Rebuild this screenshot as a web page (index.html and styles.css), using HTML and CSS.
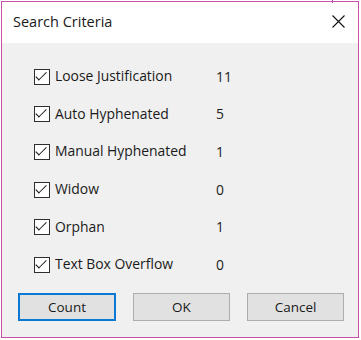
FILE: index.html
```html
<!DOCTYPE html>
<html lang="en">
<head>
    <meta charset="UTF-8">
    <title>Search Criteria</title>
    <link rel="stylesheet" href="styles.css">
</head>
<body>
    <div class="dialog">
        <span class="tick-mark"></span>
        <div class="title-bar">
            <span class="title">Search Criteria</span>
            <svg class="close" width="13" height="13" viewBox="0 0 13 13">
                <path d="M0.5 0.5 L12.5 12.5 M12.5 0.5 L0.5 12.5" stroke="#111" stroke-width="1.1" fill="none"/>
            </svg>
        </div>

        <div class="content">
            <div class="criteria">
                <div class="row"><span class="check"></span><span class="label">Loose Justification</span><span class="count">11</span></div>
                <div class="row"><span class="check"></span><span class="label">Auto Hyphenated</span><span class="count">5</span></div>
                <div class="row"><span class="check"></span><span class="label">Manual Hyphenated</span><span class="count">1</span></div>
                <div class="row"><span class="check"></span><span class="label">Widow</span><span class="count">0</span></div>
                <div class="row"><span class="check"></span><span class="label">Orphan</span><span class="count">1</span></div>
                <div class="row"><span class="check"></span><span class="label">Text Box Overflow</span><span class="count">0</span></div>
            </div>

            <div class="buttons">
                <button class="btn btn-default">Count</button>
                <button class="btn">OK</button>
                <button class="btn">Cancel</button>
            </div>
        </div>
    </div>
</body>
</html>
```

FILE: styles.css
```css
body {
    margin: 0;
    background-color: #ffffff;
    font-family: "Open Sans", "Noto Sans", sans-serif;
    color: #1a1a1a;
}

.dialog {
    position: relative;
    margin: 1px 0 0 1px;
    width: 356px;
    height: 335px;
    border: 1px solid #c94fa9;
    background-color: #f0f0f0;
    display: flex;
    flex-direction: column;
}

.tick-mark {
    position: absolute;
    top: -2px;
    left: 330px;
    width: 1px;
    height: 3px;
    background-color: #c94fa9;
}

.title-bar {
    height: 41px;
    background-color: #ffffff;
    display: flex;
    align-items: center;
    justify-content: space-between;
    padding: 0 13px 0 11px;
}

.title {
    font-size: 14.5px;
    padding-bottom: 2px;
}

.close {
    display: block;
    margin-bottom: 2px;
}

.content {
    flex: 1;
    padding: 19px 0 0 16px;
}

.criteria {
    padding-left: 16px;
}

.row {
    display: flex;
    align-items: center;
    height: 37.6px;
    font-size: 13.9px;
}

.row:first-child {
    margin-top: -4px;
}

.check {
    width: 14px;
    height: 14px;
    border: 1px solid #2e2e2e;
    background-color: #ffffff;
    position: relative;
    flex-shrink: 0;
}

.check::after {
    content: "";
    position: absolute;
    left: 2px;
    top: 1px;
    width: 8px;
    height: 4px;
    border-left: 1.3px solid #222;
    border-bottom: 1.3px solid #222;
    transform: translate(0, 2px) rotate(-45deg) scaleX(1.25);
    transform-origin: 40% 60%;
}

.label {
    width: 161px;
    padding-left: 5px;
    padding-bottom: 2px;
}

.count {
    padding-bottom: 1px;
}

.buttons {
    display: flex;
    gap: 17px;
    margin-top: 9px;
}

.btn {
    width: 97px;
    height: 28px;
    font-family: "Open Sans", "Noto Sans", sans-serif;
    font-size: 13.5px;
    color: #1a1a1a;
    background-color: #e1e1e1;
    border: 1px solid #adadad;
    padding: 0;
}

.btn-default {
    width: 98px;
    border: 2px solid #0b78d4;
}
```
